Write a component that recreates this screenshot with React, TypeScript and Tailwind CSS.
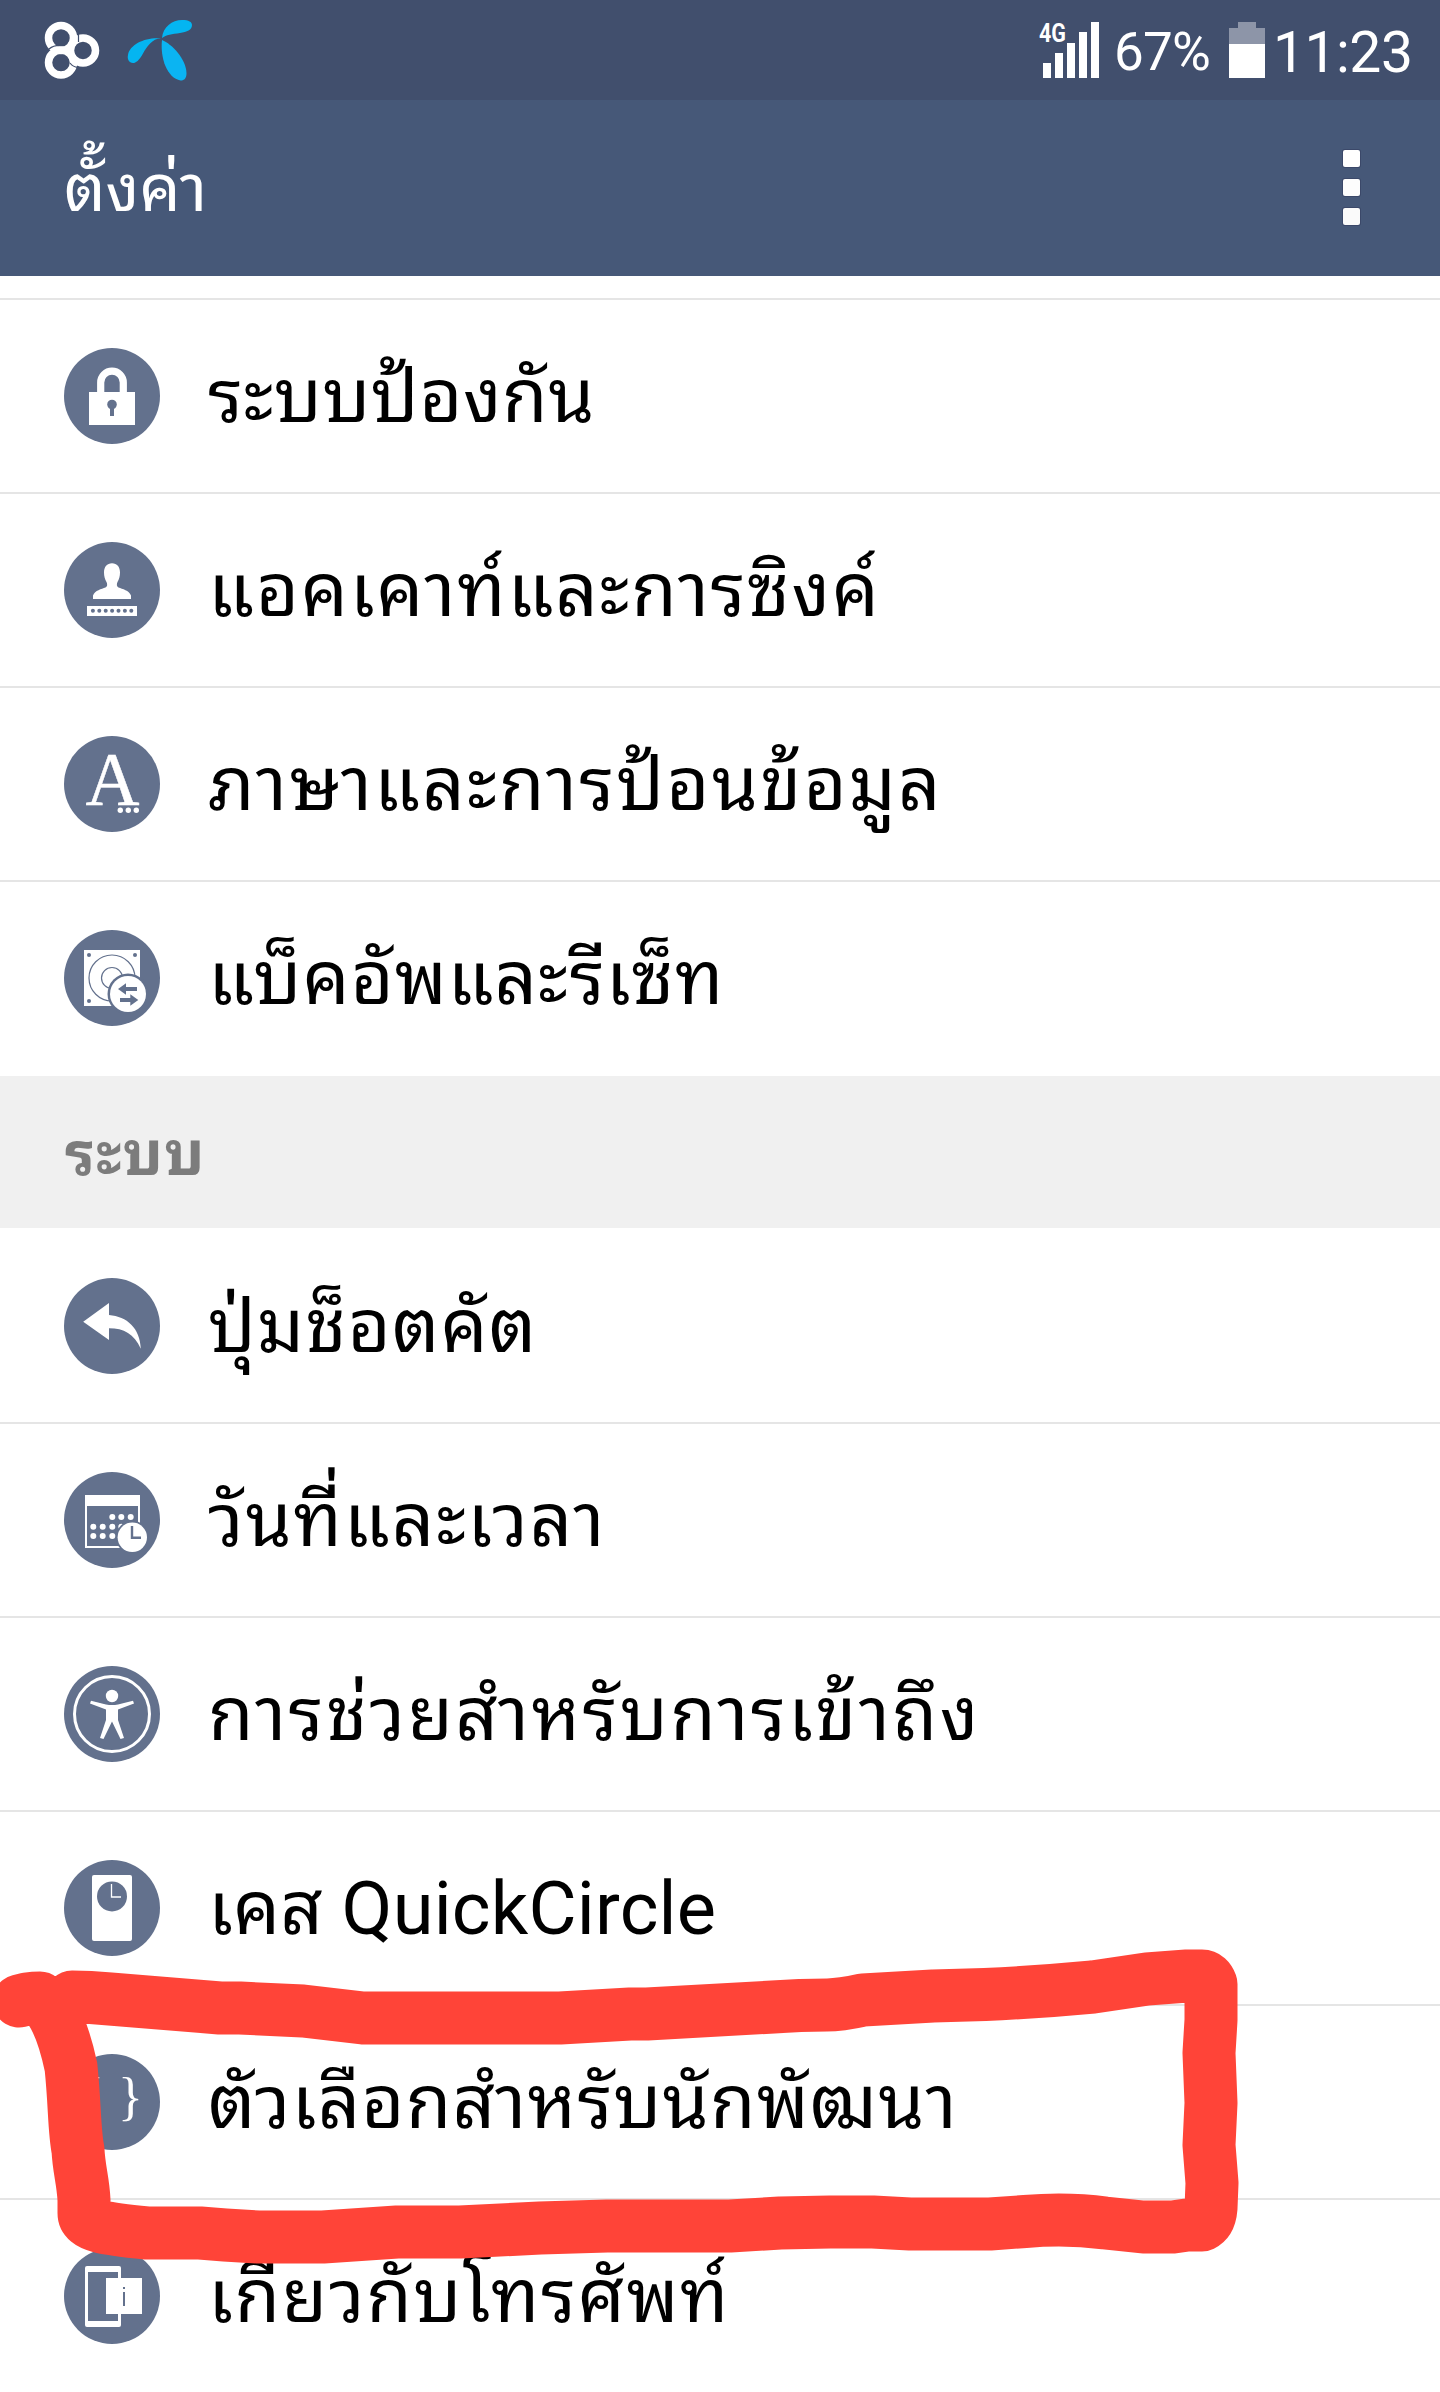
import type { ReactNode } from "react";

function Badge({ children }: { children?: ReactNode }) {
  return (
    <svg viewBox="0 0 96 96" className="w-24 h-24 shrink-0" fill="#fff">
      <circle cx="48" cy="48" r="48" fill="#63718d" />
      {children}
    </svg>
  );
}

const LockIcon = () => (
  <Badge>
    <path d="M36.7 46V34.5a11.3 11.3 0 0 1 22.6 0V46" fill="none" stroke="#fff" strokeWidth="7.2" />
    <rect x="25" y="44" width="46" height="33" />
    <circle cx="48" cy="56.5" r="4.8" fill="#63718d" />
    <rect x="46" y="58" width="4" height="10" fill="#63718d" />
  </Badge>
);

const AccountIcon = () => (
  <Badge>
    <path d="M48 21.3c5 0 8 3.7 8 9.2 0 3.8-1 7-2.5 9.5-1 2-1 4.5 1 5.5 4 1.6 10.5 2.8 12.5 8V57H29v-3.500c2-5.200 8.500-6.400 12.500-8 2-1 2-3.500 1-5.500C41 37.500 40 34.300 40 30.500c0-5.500 3-9.200 8-9.200z" />
    <rect x="23" y="64" width="50" height="10" />
    {[28.9, 35.3, 41.7, 48.1, 54.5, 60.9, 67.3].map((x) => (
      <circle key={x} cx={x} cy="68.8" r="2" fill="#63718d" />
    ))}
  </Badge>
);

const LanguageIcon = () => (
  <Badge>
    <text
      x="21.5"
      y="69"
      fontSize="77"
      textLength="54"
      lengthAdjust="spacingAndGlyphs"
      fontFamily="Liberation Serif, serif"
      stroke="#fff"
      strokeWidth="0.5"
    >
      A
    </text>
    <circle cx="56.3" cy="74.3" r="2.7" />
    <circle cx="64.3" cy="74.3" r="2.7" />
    <circle cx="72.3" cy="74.3" r="2.7" />
  </Badge>
);

const BackupIcon = () => (
  <Badge>
    <rect x="20" y="20" width="56" height="56" />
    <g fill="none" stroke="#63718d" strokeWidth="1.2">
      <circle cx="48" cy="48" r="23" />
      <circle cx="48" cy="48" r="10.5" />
    </g>
    <g fill="#63718d">
      <circle cx="25" cy="25" r="2" />
      <circle cx="71" cy="25" r="2" />
      <circle cx="25" cy="71" r="2" />
      <circle cx="64" cy="64" r="20.5" />
    </g>
    <circle cx="64" cy="64" r="18" />
    <path
      fill="#63718d"
      d="M54 59l8-5.7v3.8h11v3.8H62v3.8zM74.3 70l-8-5.7v3.8H56v3.8h10.3v3.8z"
    />
  </Badge>
);

const ShortcutIcon = () => (
  <Badge>
    <path d="M19.2 43.7L45 25v12c18 1.5 31 13 31.8 33.7C70 56 60 50.3 45 50.3V62z" />
  </Badge>
);

const DateIcon = () => (
  <Badge>
    <rect x="22" y="24" width="53" height="51" fill="none" stroke="#fff" strokeWidth="2" />
    <rect x="21" y="23" width="55" height="11" />
    {[
      [48.3, 45], [57.3, 45], [66.7, 45],
      [29.3, 54.7], [38.7, 54.7], [48.3, 54.7], [57.3, 54.7],
      [29.3, 64], [38.7, 64], [48.3, 64],
    ].map(([x, y]) => (
      <circle key={`${x}-${y}`} cx={x} cy={y} r="3" />
    ))}
    <circle cx="68.3" cy="65.3" r="16.5" fill="#63718d" />
    <circle cx="68.3" cy="65.3" r="14.7" />
    <path d="M68 54v11.7h9" fill="none" stroke="#63718d" strokeWidth="2.4" />
  </Badge>
);

const AccessIcon = () => (
  <Badge>
    <circle cx="48" cy="48" r="37.5" fill="none" stroke="#fff" strokeWidth="3" />
    <circle cx="48" cy="30" r="6.2" />
    <path d="M27 34.7L42 38.5Q48 39.5 54 38.5L69 34.7l1 2.8L54 43.5V54l6 18-3.5 1L48 55.5 39.5 73 36 72l6-18V43.5L26 37.5z" />
  </Badge>
);

const CaseIcon = () => (
  <Badge>
    <rect x="28" y="15" width="40" height="66" rx="2" />
    <circle cx="48" cy="36.4" r="15" fill="#63718d" />
    <path d="M47.5 24v13H57" fill="none" stroke="#fff" strokeWidth="1.3" />
  </Badge>
);

const DeveloperIcon = () => (
  <Badge>
    <text x="15" y="60" fontSize="52" fontFamily="Liberation Serif, serif">{"{"}</text>
    <text x="54" y="60" fontSize="52" fontFamily="Liberation Serif, serif">{"}"}</text>
  </Badge>
);

const AboutIcon = () => (
  <Badge>
    <rect x="21" y="18" width="36" height="61" rx="2" />
    <rect x="24" y="24" width="30" height="49" fill="#63718d" />
    <rect x="42" y="30" width="36" height="36" />
    <rect x="59" y="39" width="2" height="2" fill="#63718d" />
    <rect x="59" y="44" width="2" height="14" fill="#63718d" />
  </Badge>
);

const deviceItems = [
  { label: "ระบบป้องกัน", tracking: "tracking-[0.6px]", Icon: LockIcon },
  { label: "แอคเคาท์และการซิงค์", tracking: "tracking-[1.8px]", Icon: AccountIcon },
  { label: "ภาษาและการป้อนข้อมูล", tracking: "tracking-[2.2px]", Icon: LanguageIcon },
  { label: "แบ็คอัพและรีเซ็ท", tracking: "tracking-[1px]", Icon: BackupIcon },
];

const systemItems = [
  { label: "ปุ่มช็อตคัต", tracking: "tracking-[1.2px]", Icon: ShortcutIcon },
  { label: "วันที่และเวลา", tracking: "tracking-[1.9px]", Icon: DateIcon },
  { label: "การช่วยสำหรับการเข้าถึง", tracking: "tracking-[2.4px]", Icon: AccessIcon },
  { label: "เคส QuickCircle", tracking: "tracking-[0.2px]", Icon: CaseIcon },
  { label: "ตัวเลือกสำหรับนักพัฒนา", tracking: "tracking-[1.2px]", Icon: DeveloperIcon },
  { label: "เกี่ยวกับโทรศัพท์", tracking: "tracking-[1.7px]", Icon: AboutIcon },
];

function Row({ label, tracking, Icon }: { label: string; tracking: string; Icon: () => ReactNode }) {
  return (
    <li className="flex items-center h-[194px] pl-16 border-b-2 border-[#e5e5e5] last:border-transparent">
      <Icon />
      <span className={`ml-12 pt-0.5 text-[74px] leading-[96px] whitespace-nowrap ${tracking}`}>{label}</span>
    </li>
  );
}

function StatusBar() {
  return (
    <div className="flex items-start h-[100px] bg-[#414f6d] text-white">
      <svg viewBox="0 0 200 100" className="w-[200px] h-[100px]">
        {/* Notification logo: three linked rings */}
        <g fill="none" stroke="#fff" strokeWidth="7.5">
          <circle cx="61" cy="62.6" r="12.5" />
          <circle cx="83" cy="50.4" r="12.5" />
          <circle cx="61" cy="38" r="12.5" />
        </g>
        <path d="M49 49q5-4 12-3.5M78.5 33v9M70 63q3 4 8 4.5" fill="none" stroke="#414f6d" strokeWidth="1.2" />
        {/* Carrier logo */}
        <path d="M162 38C163 27 172 20 182 20c7 0 10 2 10 5 0 5-5 7-12 8-8 1-14 2-18 5z" fill="#04b5f1" />
        <path d="M161 38.5c-9 0-14 8-18 15-4 7-7 9.5-10 9.5-4 0-6-4-5-8 2-11 18-18 33-16.5z" fill="#04b5f1" />
        <path d="M162 40c10 4 24 19 24.5 33 0 5-2 7.5-6 7.5C167 78 160 58 162 40z" fill="#0bb4f2" />
      </svg>
      <div className="flex ml-auto">
        <svg viewBox="0 0 64 100" className="w-16 h-[100px]" fill="#fff">
          <text x="2" y="42" fontSize="25" fontWeight="700" textLength="27" lengthAdjust="spacingAndGlyphs">
            4G
          </text>
          <rect x="6" y="63" width="8" height="15" />
          <rect x="18" y="53" width="8" height="25" />
          <rect x="30" y="43" width="8" height="35" />
          <rect x="42" y="32" width="8" height="46" />
          <rect x="54" y="22" width="8" height="56" />
        </svg>
        <span className="w-[128px] pl-[13px] pt-[20px] text-[53px] leading-[64px] tracking-[-0.8px]">67%</span>
        <svg viewBox="0 0 36 100" className="w-9 h-[100px]" fill="#fff">
          <path d="M9 22h18v6h9v16H0V28h9z" fill="#8d95a8" />
          <rect y="44" width="36" height="34" />
        </svg>
        <span className="w-[175px] pl-[8px] pt-[21px] text-[57px] leading-[64px] tracking-[-0.5px]">11:23</span>
      </div>
    </div>
  );
}

function TitleBar() {
  return (
    <header className="flex items-center justify-between h-44 pl-16 pr-20 bg-[#465878] text-white">
      <h1 className="pt-0.5 text-[65px] leading-[96px]">ตั้งค่า</h1>
      <div className="flex flex-col gap-3 pb-0.5">
        <i className="size-[17px] rounded-xs bg-white ring-1 ring-[#3b4869]" />
        <i className="size-[17px] rounded-xs bg-[#fdfdfd] ring-1 ring-[#3b4869]" />
        <i className="size-[17px] rounded-xs bg-[#fafafa] ring-1 ring-[#3b4869]" />
      </div>
    </header>
  );
}

/* Marker stroke around the developer options row */
function Marker() {
  return (
    <svg
      viewBox="0 1900 1440 492"
      className="absolute left-0 top-[1900px] w-[1440px] h-[492px] pointer-events-none"
      fill="none"
      stroke="#ff4438"
      strokeWidth="53"
      strokeLinecap="round"
      strokeLinejoin="round"
    >
      <path d="M19 2001L27 1999Q34 1998 40 1998Q60 2015 71 2067C75 2105 74 2130 78 2150C79 2170 83 2180 84 2200V2213C84 2226 105 2229 147 2233H200L225 2235L258 2237H323L397 2232H460L540 2228L607 2226H730L780 2223L830 2222H873L910 2224H990L1025 2221.5Q1067 2218 1105 2223L1143 2227H1173L1187 2225H1202Q1210 2221 1211 2208L1212 2183L1209 2145L1211 2103L1209 2053L1211 2020V1984Q1208 1976 1202 1976H1187L1147 1979L1093 1987Q1040 1992 985 1994.5L933 1996L863 2000Q840 2005 827 2005L800 2005.5L647 2014H630L560 2018H363L303 2011L240 2008H220L110 1999Q90 1997 72 1997" />
    </svg>
  );
}

export default function App() {
  return (
    <div
      className="relative w-[1440px] h-[2392px] overflow-hidden bg-white text-black"
      style={{ fontFamily: 'Roboto, "Noto Sans Thai Looped", "Noto Sans Thai", "Noto Sans", sans-serif' }}
    >
      <StatusBar />
      <TitleBar />
      <ul className="mt-[22px] border-t-2 border-[#e5e5e5]">
        {deviceItems.map((item) => (
          <Row key={item.label} {...item} />
        ))}
      </ul>
      <h2 className="flex items-center h-[152px] pl-[65px] pt-1.5 bg-[#f0f0f0] text-[#7c7c7c] text-[60px] leading-[80px] font-bold tracking-[1.2px]">
        ระบบ
      </h2>
      <ul className="pt-0.5">
        {systemItems.map((item) => (
          <Row key={item.label} {...item} />
        ))}
      </ul>
      <Marker />
    </div>
  );
}
